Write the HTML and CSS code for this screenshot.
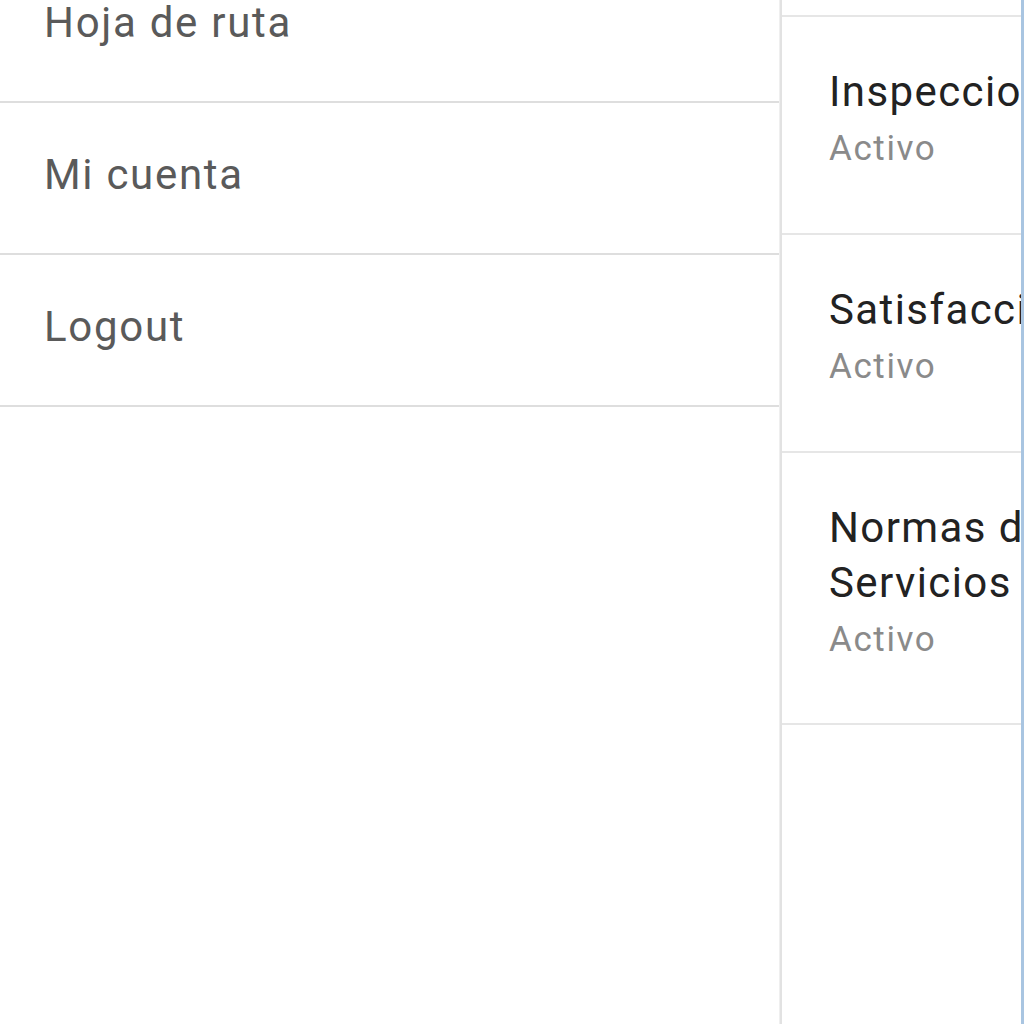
FILE: index.html
```html
<!DOCTYPE html>
<html lang="es">
<head>
<meta charset="utf-8">
<link rel="stylesheet" href="styles.css">
</head>
<body>
<div class="screen">
  <nav class="drawer">
    <ul class="menu">
      <li class="menu-item">Hoja de ruta</li>
      <li class="menu-item">Mi cuenta</li>
      <li class="menu-item">Logout</li>
    </ul>
  </nav>
  <div class="divider"></div>
  <main class="content">
    <div class="list">
      <div class="row row-stub"></div>
      <div class="row">
        <div class="title">Inspeccion</div>
        <div class="status">Activo</div>
      </div>
      <div class="row">
        <div class="title">Satisfaccion</div>
        <div class="status">Activo</div>
      </div>
      <div class="row">
        <div class="title">Normas de Servicios</div>
        <div class="status">Activo</div>
      </div>
    </div>
  </main>
  <div class="edge"></div>
</div>
</body>
</html>
```

FILE: styles.css
```css
html, body {
  margin: 0;
  padding: 0;
  background: #ffffff;
}
body {
  font-family: Roboto, "Liberation Sans", sans-serif;
}
.screen {
  display: flex;
  width: 1024px;
  height: 1024px;
  overflow: hidden;
}
.drawer {
  width: 779px;
  flex: none;
  background: #ffffff;
}
.menu {
  list-style: none;
  margin: -53px 0 0 0;
  padding: 0;
}
.menu-item {
  height: 150px;
  box-sizing: content-box;
  display: flex;
  align-items: center;
  padding: 0 0 4px 44px;
  margin-top: -4px;
  border-bottom: 2px solid #dedede;
  font-size: 42px;
  letter-spacing: 1.7px;
  color: #5a5a5a;
}
.menu-item:first-child {
  margin-top: 0;
}
.divider {
  width: 3px;
  flex: none;
  background: #e2e2e2;
  border-left: 1px solid #efefef;
  box-sizing: border-box;
}
.content {
  flex: 1;
  overflow: hidden;
  background: #ffffff;
}
.list {
  width: 440px;
}
.row {
  border-bottom: 2px solid #e6e6e6;
  padding: 47px 0 0 47px;
  height: 169px;
}
.row:last-child {
  height: 223px;
}
.row-stub {
  height: 15px;
  padding: 0;
}
.title {
  width: 330px;
  font-size: 42px;
  line-height: 55px;
  letter-spacing: 1.4px;
  color: #222222;
}
.status {
  margin-top: 7px;
  font-size: 35px;
  line-height: 46px;
  letter-spacing: 1.6px;
  color: #8a8a8a;
}
.edge {
  width: 3px;
  flex: none;
  background: #a9c5e1;
}
```
